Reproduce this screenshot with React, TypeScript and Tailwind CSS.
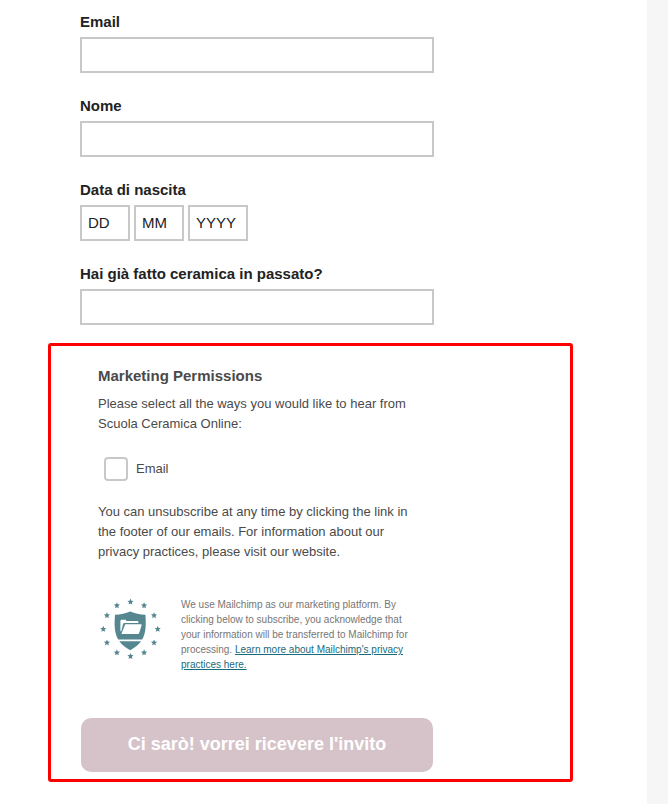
import type { ReactNode } from "react";

function Field({ id, label, type = "text" }: { id: string; label: string; type?: string }) {
  return (
    <div className="flex flex-col gap-[3px]">
      <label htmlFor={id} className="text-[15px] leading-6 font-bold">
        {label}
      </label>
      <input
        id={id}
        type={type}
        className="h-9 w-full border-2 border-[#c8c8c8] bg-white px-[5px] text-[15px] outline-none"
      />
    </div>
  );
}

function DatePart({ label, placeholder, className }: { label: string; placeholder: string; className: string }) {
  return (
    <input
      type="text"
      inputMode="numeric"
      aria-label={label}
      placeholder={placeholder}
      className={`h-9 border-2 border-[#c8c8c8] bg-white px-[6px] pb-[2px] text-[15px] outline-none placeholder:text-[#222222] ${className}`}
    />
  );
}

function Paragraph({ children }: { children: ReactNode }) {
  return <p className="text-[13px] leading-5">{children}</p>;
}

const STAR = "M0-3.2L.9-1.1 3.1-.9 1.4.6 1.9 2.8 0 1.7-1.9 2.8-1.4.6-3.1-.9-.9-1.1Z";

function PrivacyShield() {
  const stars = Array.from({ length: 12 }, (_, i) => {
    const angle = (i * Math.PI) / 6;
    return { x: 32.5 + 27.2 * Math.sin(angle), y: 32 - 27.2 * Math.cos(angle) };
  });
  return (
    <svg viewBox="0 0 64 64" className="size-16 shrink-0 text-[#568690]" fill="currentColor" aria-hidden="true">
      {stars.map((s, i) => (
        <path key={i} d={STAR} transform={`translate(${s.x} ${s.y})`} />
      ))}
      <g transform="translate(.7 0)">
        <path d="M31.5 14.500C36 16.500 41 17.700 46.700 17.700C47.500 27.500 47.300 36 43.500 42.500H19.500C15.700 36 15.500 27.500 16.300 17.700C22 17.700 27 16.500 31.500 14.500Z" />
        <path d="M20.600 44.300H42.400C39.500 48.200 36 50.700 31.500 53.200C27 50.700 23.500 48.200 20.600 44.300Z" />
        <path
          fill="white"
          d="M21.700 34V24.300C21.700 23.200 22.100 22.700 22.900 22.700H26.300C27.200 22.700 27.400 23.100 27.600 23.900H38.500C39.300 23.900 39.700 24.400 39.700 25.100V26.100H25.800C25 26.100 24.500 26.500 24.300 27.200L22.500 34.500Z"
        />
        <path
          fill="white"
          d="M26.500 27.200H42.100C42.800 27.200 43.100 27.700 42.900 28.300L40.500 36C40.200 36.800 39.900 37 39.200 37H22.700Z"
        />
      </g>
    </svg>
  );
}

export default function App() {
  return (
    <div className="min-h-screen bg-[#f6f6f6] pr-[21px] font-['Liberation_Sans',Arial,sans-serif]">
      <main className="min-h-screen bg-white pt-[10px] pb-5 pl-12 text-[#222222]">
        <form onSubmit={(e) => e.preventDefault()}>
          <div className="ml-8 flex max-w-[354px] flex-col gap-[21px]">
            <Field id="email" label="Email" type="email" />
            <Field id="nome" label="Nome" />
            <fieldset>
              <legend className="mb-[3px] text-[15px] leading-6 font-bold">Data di nascita</legend>
              <div className="flex gap-1">
                <DatePart label="Giorno" placeholder="DD" className="w-[50px]" />
                <DatePart label="Mese" placeholder="MM" className="w-[50px]" />
                <DatePart label="Anno" placeholder="YYYY" className="w-[60px]" />
              </div>
            </fieldset>
            <Field id="ceramica" label="Hai già fatto ceramica in passato?" />
          </div>

          <section className="mt-[18px] max-w-[525px] rounded-[3px] border-3 border-[#ff0000] px-[30px] pt-[18px] pb-[7px] text-[#4a4a4a]">
            <div className="max-w-[352px]">
              <div className="pr-4 pl-[17px]">
                <h2 className="mb-[6px] text-[15px] leading-6 font-bold">Marketing Permissions</h2>
                <Paragraph>Please select all the ways you would like to hear from Scuola Ceramica Online:</Paragraph>
                <label className="mt-[23px] mb-[21px] ml-[6px] flex w-fit items-center gap-2 text-[13px] leading-6">
                  <input
                    type="checkbox"
                    className="size-6 appearance-none rounded-[4px] border-2 border-[#c8c8c8] bg-white checked:bg-[#568690]"
                  />
                  Email
                </label>
                <Paragraph>
                  You can unsubscribe at any time by clicking the link in the footer of our emails. For information
                  about our privacy practices, please visit our website.
                </Paragraph>
                <div className="mt-[35px] flex gap-[19px]">
                  <PrivacyShield />
                  <p className="text-[10px] leading-[15px] text-[#767676]">
                    We use Mailchimp as our marketing platform. By clicking below to subscribe, you acknowledge that
                    your information will be transferred to Mailchimp for processing.{" "}
                    <a href="#privacy" className="text-[#176b7c] underline">
                      Learn more about Mailchimp&apos;s privacy practices here.
                    </a>
                  </p>
                </div>
              </div>
              <button
                type="submit"
                className="mt-[46px] h-[54px] w-full rounded-[10px] bg-[#d6c3c9] pb-[2px] text-[18px] font-bold text-white"
              >
                Ci sarò! vorrei ricevere l&apos;invito
              </button>
            </div>
          </section>
        </form>
      </main>
    </div>
  );
}
